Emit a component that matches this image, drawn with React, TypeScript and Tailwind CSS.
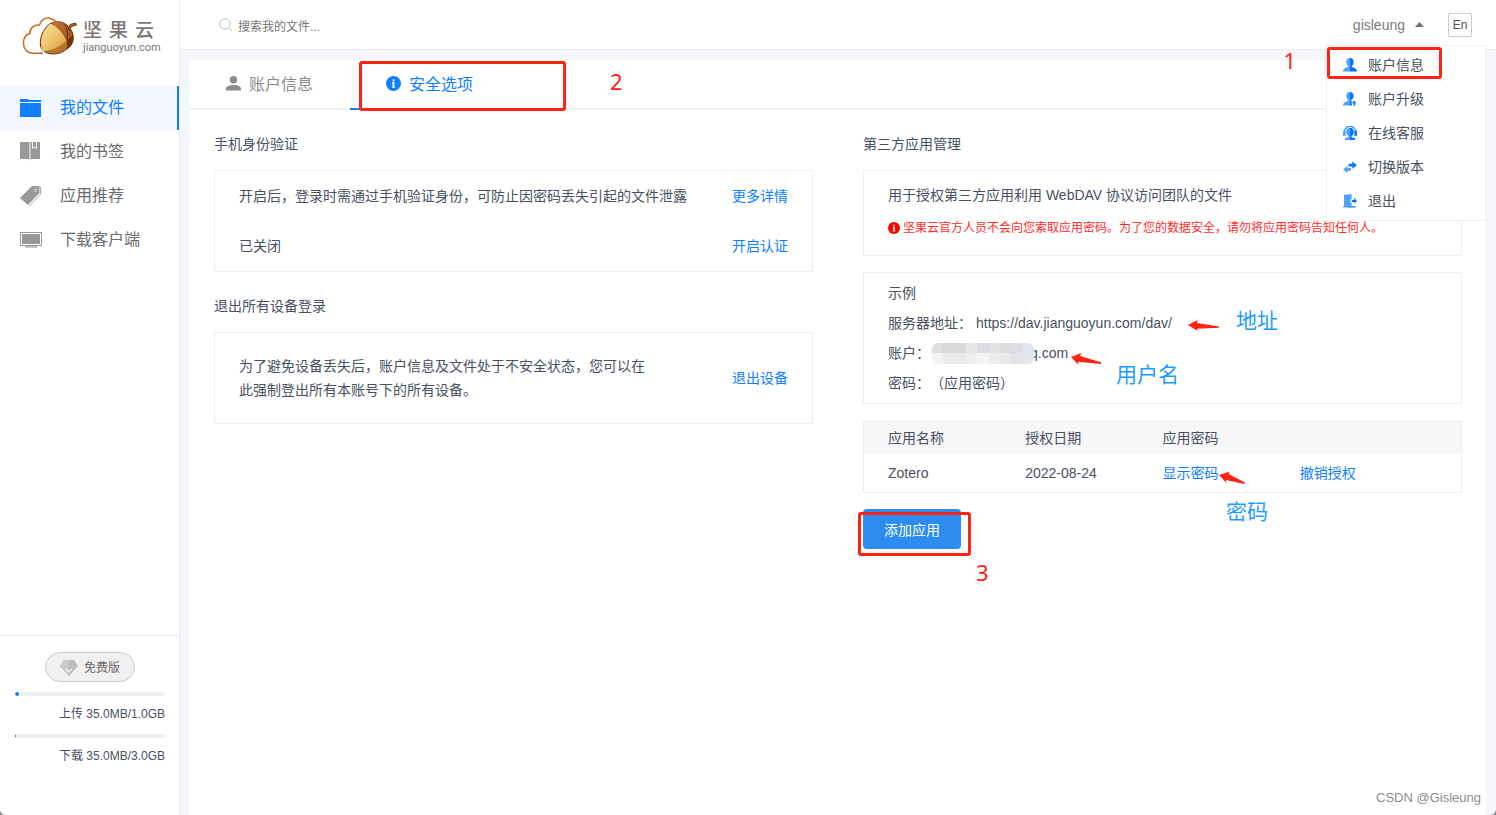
import React from 'react';

const BLUE = '#0f7fff';

function Logo() {
  return (
    <svg width="56" height="40" viewBox="22 16 56 40" fill="none" aria-hidden="true">
      <defs>
        <linearGradient id="nut" x1="0" y1="0" x2="1" y2="1">
          <stop offset="0" stopColor="#ffe3a0" />
          <stop offset="0.5" stopColor="#efc56c" />
          <stop offset="1" stopColor="#d29a3c" />
        </linearGradient>
        <linearGradient id="cap" x1="0" y1="0" x2="1" y2="1">
          <stop offset="0" stopColor="#c9773a" />
          <stop offset="1" stopColor="#a3541f" />
        </linearGradient>
      </defs>
      <path
        d="M43 53.2H33C27 53.2 23.4 48.6 23.4 43.2C23.4 38 26 34.6 29.8 33.6C29.6 28.4 34 24.4 39.4 25C40.6 20.4 45 17.6 49.4 18.2C52 18.5 54 19.6 55.4 21.2"
        stroke="#c8692b"
        strokeWidth="1.5"
      />
      <path d="M51 23C44 27.5 40 36 40.3 44C40.4 49.5 45 54 53 54C60 54 66 51 69 46L67 38Z" fill="#b5772c" stroke="#6e3a18" strokeWidth="1" />
      <path d="M51 23.5C44.6 28 40.8 36 41 43.6C41 47.4 42 49.8 43 51.2C52 50.4 62 46.4 66.6 40C63.4 33 57.6 27 51 23.5Z" fill="url(#nut)" />
      <path d="M50.6 23C54 21 59.6 20.6 64 22.8C70 25.8 73.8 31.6 73.8 38C73.6 43.4 71 47.6 66 50C67.4 46.4 67.6 43 66.6 40C63.4 33 57.6 26.8 50.6 23Z" fill="#713208" />
      <path d="M51.4 23C55 21.2 60 21.4 64 23.4C66.6 28 67.4 34 66.6 39.4C63.4 33 57.8 26.6 51.4 23Z" fill="url(#cap)" />
      <path d="M65 24C69.4 26.6 72.2 31 72.6 36C71.4 36.6 69.2 38.4 68 39.8C68.4 34 67.6 29 65 24Z" fill="#a65a25" />
      <path d="M69 29C69.6 26 71.6 24.6 75.2 24.4" stroke="#7a3d18" strokeWidth="3.2" strokeLinecap="round" />
      <path d="M69.6 28C70.4 25.6 72.4 24.4 75 24.2" stroke="#b8662c" strokeWidth="1.2" strokeLinecap="round" />
    </svg>
  );
}

const FolderIcon = () => (
  <svg width="22" height="20" viewBox="0 0 22 20" fill={BLUE} aria-hidden="true">
    <path d="M0 1h8l1 1h12v2H0zM0 5h21v14H0z" />
  </svg>
);
const BookmarkIcon = () => (
  <svg width="22" height="20" viewBox="0 0 22 20" aria-hidden="true">
    <path d="M0 0h9.4v18.4L8.6 17H0zM10.4 0H20v17h-8.8l-.8 1.4z" fill="#999" />
    <path d="M12.5 0v6.500l2-1.600 2 1.600V0" fill="none" stroke="#fff" strokeWidth="0.9" />
  </svg>
);
const TagIcon = () => (
  <svg width="22" height="22" viewBox="0 0 22 22" aria-hidden="true">
    <path d="M12 1h7.500v7L8 20 0 13z" fill="#999" />
    <path d="M20.500 2v7L9.500 20.800" fill="none" stroke="#aaa" strokeWidth="1" />
    <circle cx="15.500" cy="5.200" r="1.300" fill="none" stroke="#ddd" strokeWidth="0.9" />
  </svg>
);
const ScreenIcon = () => (
  <svg width="22" height="16" viewBox="0 0 22 16" aria-hidden="true">
    <rect x="0.500" y="0.500" width="21" height="13" fill="none" stroke="#999" />
    <path d="M2 2h18v10H2zM5 14.200h12v1.300H5z" fill="#999" />
  </svg>
);

const InfoIcon = ({ size, color }: { size: number; color: string }) => (
  <svg width={size} height={size} viewBox="0 0 16 16" className="shrink-0" aria-hidden="true">
    <circle cx="8" cy="8" r="8" fill={color} />
    <path d="M7 3.500h2v2H7zM6.400 6.500H9v5h.8v1H6.300v-1H7v-4h-.6z" fill="#fff" />
  </svg>
);

const person = 'M7.500 0C5 0 3.600 1.800 3.600 4.200C3.600 6.400 4.600 7.800 5.600 8.600V9.600C3 10.200 0 11.200 0 14.500H7.500Z';
const personRight = 'M7.500 0C10 0 11.400 1.800 11.400 4.200C11.400 6.400 10.400 7.800 9.400 8.600V9.600C12 10.200 15 11.200 15 14.500H7.500Z';

const menu = [
  {
    label: '账户信息',
    icon: (
      <>
        <path d={person} fill="#4da3ff" />
        <path d={personRight} fill="#0a73ff" />
      </>
    ),
  },
  {
    label: '账户升级',
    icon: (
      <>
        <path d={person} fill="#4da3ff" />
        <path d="M7.500 0C10 0 11.400 1.800 11.400 4.200C11.400 6.400 10 7.800 8.600 8.600L9.600 11V14.500H7.500Z" fill="#0a73ff" />
        <path d="M12 9l3 3.200h-2V15h-2v-2.800H9z" fill="#0a73ff" stroke="#fff" strokeWidth="0.4" />
      </>
    ),
  },
  {
    label: '在线客服',
    icon: (
      <>
        <path d="M1.500 6a6 5.600 0 0 1 12 0" fill="none" stroke="#2f8fff" strokeWidth="1.4" />
        <path d="M0 5h2.800v5.500H0zM7.500 1.800C4.600 1.800 3.400 4 3.400 6.400S5 10.600 6 11.200V12L2 13.200V15h5.500z" fill="#4da3ff" />
        <path d="M15 5h-2.800v5.500H15zM7.500 1.800c2.900 0 4.100 2.200 4.100 4.600S10 10.600 9 11.200V12l4 1.200V15H7.500z" fill="#0a73ff" />
      </>
    ),
  },
  {
    label: '切换版本',
    icon: (
      <>
        <path d="M6 4h4V1.600L15 5.500l-5 3.900V7H6z" fill="#0a73ff" />
        <path d="M8.500 8.600H5V6.400L0 10.200l5 3.800v-2.400h3.500z" fill="#4da3ff" />
      </>
    ),
  },
  {
    label: '退出',
    icon: (
      <>
        <path d="M1 1l7-1v15l-7-1zM0 13h4v1.500H0z" fill="#4da3ff" />
        <path d="M8 0h1v6H8zM8 9h1v4h4.500v1.500H8zM9.500 6.500H12V4l3 3.500-3 3V8.500H9.500z" fill="#0a73ff" />
      </>
    ),
  },
];

const nav = [
  { label: '我的文件', icon: <FolderIcon />, active: true },
  { label: '我的书签', icon: <BookmarkIcon />, active: false },
  { label: '应用推荐', icon: <TagIcon />, active: false },
  { label: '下载客户端', icon: <ScreenIcon />, active: false },
];

const mosaic = [
  '#dedee0', '#d9d9dc', '#dadadd', '#e6e7e9', '#dcdde0', '#e1e2e4', '#dbdcde', '#dfdfe2', '#e0e6ee',
  '#f3f3f4', '#ebebed', '#e9eaec', '#eeeeef', '#f3f4f6', '#ebecee', '#e9e9eb', '#e3e3e5', '#e4e8ee',
];

const linkClass = 'whitespace-nowrap text-[#0f7fff]';
const frame = 'pointer-events-none absolute rounded-[3px] border-3 border-[#ff2313]';
const step = "pointer-events-none absolute font-['Noto_Sans',sans-serif] text-[22px] leading-6 text-[#ff2313]";
const note = 'pointer-events-none absolute whitespace-nowrap text-[21px] leading-6 text-[#1e9bff]';

function Arrow({ className, d }: { className: string; d: string }) {
  return (
    <svg className={'pointer-events-none absolute ' + className} width="32" height="14" viewBox="0 0 32 14" aria-hidden="true">
      <path d={d} fill="#ff2313" />
    </svg>
  );
}

function Quota({ label, value, fill }: { label: string; value: string; fill: string }) {
  return (
    <div>
      <div className="h-1 overflow-hidden rounded-full bg-[#f0f0f0]">
        <div className={fill} />
      </div>
      <p className="mt-2 mb-[10px] text-right text-xs leading-5">
        {label} {value}
      </p>
    </div>
  );
}

function Sidebar() {
  return (
    <aside className="flex w-[180px] shrink-0 flex-col border-r border-[#e9ebee] bg-white">
      <a href="#" className="flex h-[86px] items-start pt-4 pl-[22px]">
        <Logo />
        <span className="flex flex-col pt-1 pl-[5px] text-[#7d7671]">
          <span className="flex gap-[7px] text-[19px] leading-[22px] font-medium">
            <span>坚</span>
            <span>果</span>
            <span>云</span>
          </span>
          <span className="font-[Roboto,sans-serif] text-[11px] leading-3">jianguoyun.com</span>
        </span>
      </a>
      <nav>
        {nav.map((n) => (
          <a
            key={n.label}
            href="#"
            className={
              n.active
                ? 'flex h-11 items-center border-r-2 border-[#0f7fff] bg-[#f2f7ff] pl-5 text-base text-[#0f7fff]'
                : 'flex h-11 items-center pl-5 text-base text-[#6b6b6b]'
            }
          >
            <span className="w-10">{n.icon}</span>
            {n.label}
          </a>
        ))}
      </nav>
      <div className="mt-auto border-t border-[#e9ebee] pt-4 pr-[14px] pb-[39px] pl-[15px]">
        <button className="mx-auto mb-[10px] flex h-[30px] items-center gap-[6px] rounded-full border border-[#ccc] bg-[#f0f0f0] px-[14px] pt-px text-xs text-[#6b6b6b]">
          <svg width="18" height="16" viewBox="0 0 18 16" aria-hidden="true">
            <path d="M4 0h10l4 6-9 10L0 6z" fill="#bcbcbc" />
            <path d="M4 0L0 6l9 10V0z" fill="#c9c9c9" />
            <path d="M6 9l3 3 3-3" fill="none" stroke="#f2f2f2" strokeWidth="1.2" />
          </svg>
          免费版
        </button>
        <Quota label="上传" value="35.0MB/1.0GB" fill="h-1 w-1 rounded-full bg-[#0f7fff]" />
        <Quota label="下载" value="35.0MB/3.0GB" fill="h-1 w-px bg-[#0f7fff]" />
      </div>
    </aside>
  );
}

function Header() {
  return (
    <header className="relative flex h-[50px] items-center border-b border-[#ebedf0] bg-white pr-6 pl-[39px]">
      <label htmlFor="search" className="mr-[5px]">
        <svg width="14" height="14" viewBox="0 0 14 14" fill="none" stroke="#bbb" role="img" aria-label="搜索">
          <circle cx="6" cy="6" r="5.200" />
          <path d="M9.800 9.800L13 13" />
        </svg>
      </label>
      <input
        id="search"
        type="search"
        placeholder="搜索我的文件..."
        className="mt-1 h-6 w-60 text-xs text-[#495060] outline-none placeholder:text-[#757575]"
      />
      <button className="mr-6 ml-auto flex items-center gap-[10px] text-sm text-[#7b7b7b]">
        gisleung
        <svg width="9" height="5" viewBox="0 0 9 5" aria-hidden="true">
          <path d="M4.500 0L9 5H0z" fill="#6b7080" />
        </svg>
      </button>
      <button className="h-6 w-6 rounded-xs border border-[#ccc] text-xs">En</button>

      <span className={step + ' top-12 right-[200px]'}>1</span>
      <ul className="absolute top-[45px] right-[10px] z-10 w-[160px] border border-[#f0f0f0] bg-white py-[2px]">
        {menu.map((m) => (
          <li key={m.label}>
            <a href="#" className="flex h-[34px] items-center gap-[11px] pl-4">
              <svg width="14" height="14" viewBox="0 0 15 15" aria-hidden="true">
                {m.icon}
              </svg>
              {m.label}
            </a>
          </li>
        ))}
        <li aria-hidden="true" className={frame + ' top-px left-0 h-8 w-[115px]'} />
      </ul>
    </header>
  );
}

function Section({ title, children }: { title: string; children: React.ReactNode }) {
  return (
    <section className="pt-[22px]">
      <h2 className="mb-[14px] leading-6">{title}</h2>
      {children}
    </section>
  );
}

const card = 'border border-[#eeeff1]';

export default function App() {
  return (
    <div className="bg-[#8f8f8f]">
      <div className="relative flex min-h-screen overflow-hidden rounded-b-md bg-[#f6f7fa] font-['Liberation_Sans','Noto_Sans_CJK_SC',sans-serif] text-sm text-[#495060]">
        <Sidebar />
        <div className="flex min-w-0 flex-1 flex-col">
          <Header />
          <main className="mx-[10px] mt-[10px] flex-1 bg-white">
            <div className="flex border-b-2 border-[#f0f0f0] text-base">
              <button className="flex h-12 w-40 items-center gap-2 pt-px pl-9 text-[#8c8c8c]">
                <svg width="15" height="15" viewBox="0 0 15 15" fill="#8c8c8c" className="mb-[3px]" aria-hidden="true">
                  <circle cx="7.500" cy="3.700" r="3.700" />
                  <path d="M0 14.500V13c0-3 3.500-4 7.500-4s7.500 1 7.500 4v1.500z" />
                </svg>
                账户信息
              </button>
              <div className="relative">
                <button className="-mb-[2px] flex h-[50px] w-40 items-center gap-2 border-b-2 border-[#0f7fff] pt-px pl-9 text-[#0f7fff]">
                  <span className="mb-[3px]">
                    <InfoIcon size={15} color={BLUE} />
                  </span>
                  安全选项
                </button>
                <span className={frame + ' top-px left-[9px] h-[50px] w-[207px]'} />
                <span className={step + ' top-[9px] left-[260px]'}>2</span>
              </div>
            </div>

            <div className="grid grid-cols-2 gap-x-[50px] px-6 pb-6">
              <div>
                <Section title="手机身份验证">
                  <div className={card}>
                    <div className="flex h-[50px] items-center justify-between px-6">
                      <p>开启后，登录时需通过手机验证身份，可防止因密码丢失引起的文件泄露</p>
                      <a href="#" className={linkClass}>更多详情</a>
                    </div>
                    <div className="flex h-[50px] items-center justify-between px-6">
                      <p>已关闭</p>
                      <a href="#" className={linkClass}>开启认证</a>
                    </div>
                  </div>
                </Section>
                <Section title="退出所有设备登录">
                  <div className={card + ' flex items-center justify-between px-6 py-[21px]'}>
                    <p className="max-w-[412px] leading-6">
                      为了避免设备丢失后，账户信息及文件处于不安全状态，您可以在此强制登出所有本账号下的所有设备。
                    </p>
                    <a href="#" className={linkClass}>退出设备</a>
                  </div>
                </Section>
              </div>

              <Section title="第三方应用管理">
                <div className={card + ' px-6 pt-3 pb-[15px] leading-6'}>
                  <p>用于授权第三方应用利用 WebDAV 协议访问团队的文件</p>
                  <p className="mt-[9px] flex items-center gap-[3px] text-xs leading-6 whitespace-nowrap text-[#ff2b2b]">
                    <InfoIcon size={12} color="#f00" />
                    坚果云官方人员不会向您索取应用密码。为了您的数据安全，请勿将应用密码告知任何人。
                  </p>
                </div>

                <div className={card + ' relative mt-4 px-6 py-[5px] leading-[30px]'}>
                  <p>示例</p>
                  <p className="flex gap-1">
                    <span>服务器地址：</span>
                    <span>https://dav.jianguoyun.com/dav/</span>
                  </p>
                  <p className="flex items-center">
                    <span>账户：</span>
                    <span className="relative -mr-1 ml-[2px] grid h-[21px] w-[102px] grid-cols-9 overflow-hidden rounded-md">
                      {mosaic.map((c, i) => (
                        <span key={i} style={{ backgroundColor: c }} />
                      ))}
                    </span>
                    <span>q.com</span>
                  </p>
                  <p className="flex">
                    <span>密码：</span>
                    <span>（应用密码）</span>
                  </p>
                  <Arrow className="top-[46px] left-[324px]" d="M0 6L9.500 1L9 4L31 7.500L31 8.800L9 9.800L9.500 12Z" />
                  <span className={note + ' top-[36px] left-[372px]'}>地址</span>
                  <Arrow className="top-[79px] left-[207px]" d="M0 5L10.500 1L9 4L30 10.200L30 12L7 9.800L7.500 13Z" />
                  <span className={note + ' top-[90px] left-[252px]'}>用户名</span>
                </div>

                <div className={card + ' relative mt-[17px]'}>
                  <table className="w-full table-fixed text-left leading-5">
                    <thead className="bg-[#f6f7f9]">
                      <tr className="h-8">
                        <th className="w-[27%] pl-6 font-normal">应用名称</th>
                        <th className="w-[23%] font-normal">授权日期</th>
                        <th className="w-[23%] font-normal">应用密码</th>
                        <th className="w-[27%]" />
                      </tr>
                    </thead>
                    <tbody>
                      <tr className="h-[38px]">
                        <td className="pl-6">Zotero</td>
                        <td>2022-08-24</td>
                        <td><a href="#" className={linkClass}>显示密码</a></td>
                        <td><a href="#" className={linkClass}>撤销授权</a></td>
                      </tr>
                    </tbody>
                  </table>
                  <Arrow className="top-[48px] left-[355px]" d="M0 5L11 1.500L9.500 4L26 12.500L25.500 14L7 10L7.500 13Z" />
                  <span className={note + ' top-[78px] left-[362px]'}>密码</span>
                </div>

                <div className="relative mt-4 w-fit">
                  <button className="block h-10 rounded-sm bg-[#2d8cf0] px-[21px] pt-px text-white">添加应用</button>
                  <span className={frame + ' top-[3px] -left-[5px] h-[44px] w-[113px]'} />
                  <span className={step + ' top-[51px] left-[113px]'}>3</span>
                </div>
              </Section>
            </div>
          </main>
        </div>
        <p className="absolute right-[15px] bottom-2 text-[13px] leading-[18px] text-[#8b8b8b]">CSDN @Gisleung</p>
      </div>
    </div>
  );
}
